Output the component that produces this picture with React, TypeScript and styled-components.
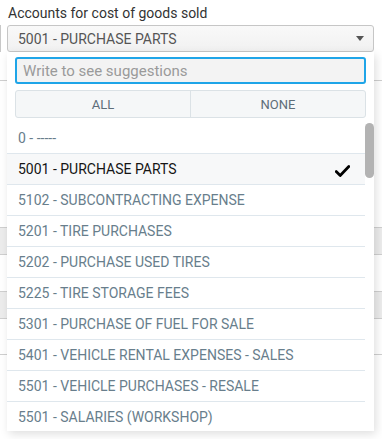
import React, { useState } from "react"
import styled, { createGlobalStyle } from "styled-components"

const GlobalStyle = createGlobalStyle`
  html, body {
    margin: 0;
    padding: 0;
    background: #ffffff;
    font-family: Roboto, "Liberation Sans", Arial, sans-serif;
    overflow: hidden;
  }
`

// only the rows visible in the open menu
const accounts = [
  "0 - -----",
  "5001 - PURCHASE PARTS",
  "5102 - SUBCONTRACTING EXPENSE",
  "5201 - TIRE PURCHASES",
  "5202 - PURCHASE USED TIRES",
  "5225 - TIRE STORAGE FEES",
  "5301 - PURCHASE OF FUEL FOR SALE",
  "5401 - VEHICLE RENTAL EXPENSES - SALES",
  "5501 - VEHICLE PURCHASES - RESALE",
  "5501 - SALARIES (WORKSHOP)",
]

const Page = styled.div`
  position: relative;
  width: 382px;
  height: 439px;
  padding-top: 5px;
  box-sizing: border-box;
`

const Label = styled.div`
  font-size: 14px;
  line-height: 16px;
  color: #333333;
  padding-left: 8px;
  margin-bottom: 4px;
`

const FieldRow = styled.div`
  display: flex;
  align-items: stretch;
  padding-right: 8px;
`

const EdgeSliver = styled.div`
  width: 1px;
  background: #c8c8c8;
  margin-right: 6px;
`

const SelectBox = styled.div`
  flex: 1;
  height: 25px;
  border: 1px solid #c6c6c6;
  border-radius: 3px;
  background: linear-gradient(#f9f9f9, #f1f1f1);
  display: flex;
  align-items: center;
  justify-content: space-between;
  padding: 0 9px 0 10px;
  font-size: 14px;
  color: #555555;
`

const Caret = styled.span`
  width: 0;
  height: 0;
  border-left: 4px solid transparent;
  border-right: 4px solid transparent;
  border-top: 5px solid #555555;
`

const Backdrop = styled.div`
  display: flex;
  flex-direction: column;
`

const BackRow = styled.div<{ $h: number; $shade?: boolean }>`
  height: ${(p) => p.$h}px;
  border-bottom: 1px solid #cfcfcf;
  background: ${(p) => (p.$shade ? "#ececec" : "transparent")};
`

const Panel = styled.div`
  position: absolute;
  top: 52px;
  left: 7px;
  width: 367px;
  height: 379px;
  background: #ffffff;
  box-shadow: 2px 3px 9px rgba(0, 0, 0, 0.13);
  display: flex;
  flex-direction: column;
`

const Tools = styled.div`
  display: flex;
  flex-direction: column;
  gap: 6px;
  padding: 5px 8px 5px 8px;
`

const SearchInput = styled.input`
  height: 27px;
  box-sizing: border-box;
  border: 2px solid #1fa5e8;
  border-radius: 3px;
  background: #f3f3f3;
  padding: 0 6px;
  font-family: Roboto, "Liberation Sans", Arial, sans-serif;
  font-size: 15px;
  color: #333333;
  outline: none;

  &::placeholder {
    color: #9a9a9a;
  }
`

const ButtonGroup = styled.div`
  display: flex;
  height: 28px;
  box-sizing: border-box;
  border: 1px solid #dbe2e6;
  border-radius: 3px;
  background: #f5f7f8;
  overflow: hidden;
`

const GroupButton = styled.button`
  flex: 1;
  border: none;
  background: transparent;
  font-family: Roboto, "Liberation Sans", Arial, sans-serif;
  font-size: 13px;
  color: #5d6d79;
  padding: 0;

  & + & {
    border-left: 1px solid #dbe2e6;
  }
`

const ListArea = styled.div`
  flex: 1;
  display: flex;
  min-height: 0;
`

const List = styled.div`
  flex: 1;
  overflow: hidden;
`

const Track = styled.div`
  width: 9px;
`

const Thumb = styled.div`
  height: 55px;
  border-radius: 5px;
  background: #b3b3b3;
`

const Item = styled.div<{ $selected?: boolean }>`
  height: 30px;
  border-bottom: 1px solid #dfe7ed;
  display: flex;
  align-items: center;
  justify-content: space-between;
  padding: 0 15px 0 11px;
  font-size: 14px;
  color: ${(p) => (p.$selected ? "#151515" : "#687e8c")};
  background: ${(p) => (p.$selected ? "#f7f8f9" : "#ffffff")};
`

const CheckIcon = styled.svg`
  width: 15px;
  height: 12px;
  margin-top: 3px;
`

function Check() {
  return (
    <CheckIcon viewBox="0 0 15 12">
      <path
        d="M1.2 6.6 L5.2 10.4 L13.8 1.6"
        fill="none"
        stroke="#000"
        strokeWidth="2.8"
        strokeLinecap="round"
        strokeLinejoin="round"
      />
    </CheckIcon>
  )
}

export default function App() {
  const [selected, setSelected] = useState(1)

  return (
    <Page>
      <GlobalStyle />
      <Label>Accounts for cost of goods sold</Label>
      <FieldRow>
        <EdgeSliver />
        <SelectBox>
          <span>{accounts[selected]}</span>
          <Caret />
        </SelectBox>
      </FieldRow>

      {/* content behind the open menu */}
      <Backdrop>
        <BackRow $h={28} />
        <BackRow $h={146} />
        <BackRow $h={26} $shade />
        <BackRow $h={36} />
        <BackRow $h={26} $shade />
        <BackRow $h={35} />
      </Backdrop>

      <Panel>
        <Tools>
          <SearchInput placeholder="Write to see suggestions" />
          <ButtonGroup>
            <GroupButton>ALL</GroupButton>
            <GroupButton>NONE</GroupButton>
          </ButtonGroup>
        </Tools>
        <ListArea>
          <List>
            {accounts.map((a, i) => (
              <Item key={i} $selected={i === selected} onClick={() => setSelected(i)}>
                <span>{a}</span>
                {i === selected && <Check />}
              </Item>
            ))}
          </List>
          <Track>
            <Thumb />
          </Track>
        </ListArea>
      </Panel>
    </Page>
  )
}
